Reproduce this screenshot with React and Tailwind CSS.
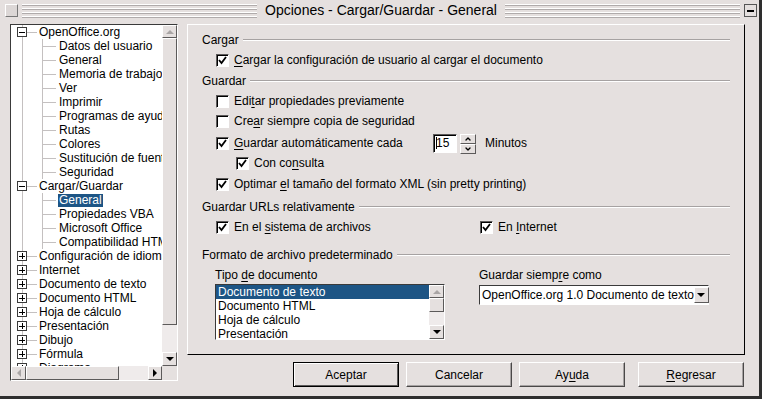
import { ChevronUp, ChevronDown } from "lucide-react";

const font = "font-['Liberation_Sans',Arial,sans-serif]";

const treeRows = [
  { t: "OpenOffice.org", lvl: 0, exp: "-" },
  { t: "Datos del usuario", lvl: 1 },
  { t: "General", lvl: 1 },
  { t: "Memoria de trabajo", lvl: 1 },
  { t: "Ver", lvl: 1 },
  { t: "Imprimir", lvl: 1 },
  { t: "Programas de ayuda", lvl: 1 },
  { t: "Rutas", lvl: 1 },
  { t: "Colores", lvl: 1 },
  { t: "Sustitución de fuentes", lvl: 1 },
  { t: "Seguridad", lvl: 1 },
  { t: "Cargar/Guardar", lvl: 0, exp: "-" },
  { t: "General", lvl: 1, sel: true },
  { t: "Propiedades VBA", lvl: 1 },
  { t: "Microsoft Office", lvl: 1 },
  { t: "Compatibilidad HTML", lvl: 1 },
  { t: "Configuración de idioma", lvl: 0, exp: "+" },
  { t: "Internet", lvl: 0, exp: "+" },
  { t: "Documento de texto", lvl: 0, exp: "+" },
  { t: "Documento HTML", lvl: 0, exp: "+" },
  { t: "Hoja de cálculo", lvl: 0, exp: "+" },
  { t: "Presentación", lvl: 0, exp: "+" },
  { t: "Dibujo", lvl: 0, exp: "+" },
  { t: "Fórmula", lvl: 0, exp: "+" },
  { t: "Diagrama", lvl: 0, exp: "+" },
];

// little +/- box used in the tree
function Expander({ sign }) {
  return (
    <span className="absolute left-[5px] top-[2px] flex h-[10px] w-[10px] items-center justify-center border border-[#3a3a3a] bg-white">
      <span className="absolute h-px w-[6px] bg-black" />
      {sign === "+" && <span className="absolute h-[6px] w-px bg-black" />}
    </span>
  );
}

function TreeRow({ row }) {
  return (
    <div className="flex h-[14px] items-center">
      <div className={`relative h-full shrink-0 ${row.lvl ? "w-[46px]" : "w-[26px]"}`}>
        <span className="absolute inset-y-0 left-[10px] border-l border-[#c4c0c0]" />
        {row.lvl === 0 ? (
          <>
            <span className="absolute left-[15px] top-[7px] w-[10px] border-t border-[#c4c0c0]" />
            <Expander sign={row.exp} />
          </>
        ) : (
          <>
            <span className="absolute inset-y-0 left-[30px] border-l border-[#c4c0c0]" />
            <span className="absolute left-[30px] top-[7px] w-[14px] border-t border-[#c4c0c0]" />
          </>
        )}
      </div>
      <span
        className={`whitespace-nowrap px-px leading-[13px] ${
          row.sel ? "bg-[#1d5585] text-white" : "text-black"
        }`}
      >
        {row.t}
      </span>
    </div>
  );
}

function ArrowBtn({ dir, className = "" }) {
  const paths = {
    up: "M1 6 L5 2 L9 6 Z",
    down: "M1 2 L9 2 L5 6 Z",
    left: "M6 1 L2 5 L6 9 Z",
    right: "M2 1 L6 5 L2 9 Z",
  };
  const vert = dir === "up" || dir === "down";
  return (
    <div
      className={`flex shrink-0 items-center justify-center border border-t-white border-l-white border-b-[#5c5a5a] border-r-[#5c5a5a] bg-[#e5e0df] ${className}`}
    >
      <svg width={vert ? 10 : 8} height={vert ? 8 : 10} viewBox={vert ? "0 0 10 8" : "0 0 8 10"}>
        <path d={paths[dir]} fill={dir === "up" || dir === "left" ? "#a9a5a5" : "#000"} />
      </svg>
    </div>
  );
}

function Check({ on }) {
  return (
    <span className="flex h-[13px] w-[13px] shrink-0 items-center justify-center border border-t-[#5c5a5a] border-l-[#5c5a5a] border-b-white border-r-white bg-white shadow-[inset_1px_1px_0_#000]">
      {on && (
        <svg width="9" height="9" viewBox="0 0 9 9">
          <path d="M1 4 L3.5 7 L8 1" fill="none" stroke="#000" strokeWidth="1.8" />
        </svg>
      )}
    </span>
  );
}

// label text with an underlined access key
function Label({ text, u }) {
  if (u === undefined) return <span>{text}</span>;
  return (
    <span className="whitespace-nowrap">
      {text.slice(0, u)}
      <span className="underline underline-offset-2">{text[u]}</span>
      {text.slice(u + 1)}
    </span>
  );
}

function CheckRow({ on, text, u, className = "" }) {
  return (
    <div className={`flex h-[20px] items-center gap-[5px] ${className}`}>
      <Check on={on} />
      <Label text={text} u={u} />
    </div>
  );
}

function Heading({ text, className = "" }) {
  return (
    <div className={`flex h-[20px] items-center gap-[4px] pr-[14px] ${className}`}>
      <span className="whitespace-nowrap">{text}</span>
      <div className="flex-1 border-t border-b border-t-[#a6a2a2] border-b-white" />
    </div>
  );
}

function Button({ children, def }) {
  return (
    <button
      className={`h-[25px] w-[106px] bg-[#e5e0df] text-black ${
        def
          ? "border border-black shadow-[inset_1px_1px_0_#fff,inset_-1px_-1px_0_#5c5a5a]"
          : "border border-t-white border-l-white border-b-[#4a4848] border-r-[#4a4848] shadow-[inset_-1px_-1px_0_#a6a2a2]"
      }`}
    >
      {children}
    </button>
  );
}

function Stripes({ className }) {
  return (
    <div className={`flex flex-col gap-[2px] ${className}`}>
      {[0, 1, 2, 3].map((i) => (
        <div key={i} className="border-t border-b border-t-white border-b-[#b0abab]" />
      ))}
    </div>
  );
}

export default function App() {
  return (
    <div
      className={`${font} flex h-[399px] w-[762px] flex-col overflow-hidden border-r-[3px] border-b-[3px] border-r-[#2e2e2e] border-b-[#2e2e2e] bg-[#e5e0df] text-[12px] text-black`}
    >
      {/* title bar */}
      <div className="flex h-[21px] shrink-0 items-center gap-[4px] pl-[5px] pr-[2px]">
        <div className="h-[13px] w-[13px] shrink-0 border border-t-white border-l-white border-b-[#777] border-r-[#777] bg-[#dcd7d6]" />
        <Stripes className="flex-1" />
        <span className="px-[4px] text-[14px] whitespace-nowrap">Opciones - Cargar/Guardar - General</span>
        <Stripes className="flex-1" />
        <div className="flex h-[13px] w-[13px] shrink-0 items-center justify-center border border-[#555] bg-[#e5e0df]">
          <span className="h-[2px] w-[7px] bg-black" />
        </div>
      </div>

      <div className="flex flex-1 gap-[9px] pl-[10px] pt-[3px]">
        {/* tree */}
        <div className="flex h-[357px] w-[168px] shrink-0 flex-col border border-t-[#3a3a3a] border-l-[#3a3a3a] border-b-white border-r-white shadow-[inset_1px_1px_0_#8a8686]">
          <div className="flex min-h-0 flex-1">
            <div className="min-w-0 flex-1 overflow-hidden bg-white pl-[1px]">
              {treeRows.map((r, i) => (
                <TreeRow key={i} row={r} />
              ))}
            </div>
            <div className="flex w-[15px] flex-col bg-[#efebeb]">
              <ArrowBtn dir="up" className="h-[13px]" />
              <div className="h-[287px] border border-t-white border-l-white border-b-[#5c5a5a] border-r-[#5c5a5a] bg-[#e5e0df]" />
              <div className="flex-1" />
              <ArrowBtn dir="down" className="h-[14px]" />
            </div>
          </div>
          <div className="flex h-[14px] shrink-0 bg-[#efebeb]">
            <ArrowBtn dir="left" className="w-[15px]" />
            <div className="w-[93px] border border-t-white border-l-white border-b-[#5c5a5a] border-r-[#5c5a5a] bg-[#e5e0df]" />
            <div className="flex-1" />
            <ArrowBtn dir="right" className="w-[14px]" />
            <div className="w-[15px] bg-[#e5e0df]" />
          </div>
        </div>

        {/* right column */}
        <div className="flex w-[558px] flex-col">
          <div className="flex h-[331px] flex-col border border-t-white border-l-white border-b-black border-r-black pl-[14px] pt-[5px]">
            <Heading text="Cargar" />
            <CheckRow on text="Cargar la configuración de usuario al cargar el documento" u={0} className="pl-[14px]" />
            <Heading text="Guardar" className="mt-[1px]" />
            <CheckRow text="Editar propiedades previamente" u={3} className="pl-[14px]" />
            <CheckRow text="Crear siempre copia de seguridad" u={3} className="pl-[14px]" />
            <div className="mt-[2px] flex h-[20px] items-center pl-[14px]">
              <div className="flex w-[217px] items-center gap-[5px]">
                <Check on />
                <Label text="Guardar automáticamente cada" u={0} />
              </div>
              <div className="flex h-[19px] w-[24px] items-center border border-t-[#5c5a5a] border-l-[#5c5a5a] border-b-white border-r-white bg-white pl-[2px] shadow-[inset_1px_1px_0_#000]">
                <span className="h-[12px] w-px bg-black" />
                <span className="-ml-px">15</span>
              </div>
              <div className="ml-[3px] flex h-[18px] w-[16px] flex-col">
                <div className="flex flex-1 items-center justify-center border border-t-white border-l-white border-b-[#5c5a5a] border-r-[#5c5a5a]">
                  <ChevronUp size={8} strokeWidth={4} color="#000" />
                </div>
                <div className="flex flex-1 items-center justify-center border border-t-white border-l-white border-b-[#5c5a5a] border-r-[#5c5a5a]">
                  <ChevronDown size={8} strokeWidth={4} color="#000" />
                </div>
              </div>
              <span className="ml-[9px]">Minutos</span>
            </div>
            <CheckRow on text="Con consulta" u={6} className="pl-[34px]" />
            <CheckRow on text="Optimar el tamaño del formato XML (sin pretty printing)" u={8} className="mt-[1px] pl-[14px]" />
            <Heading text="Guardar URLs relativamente" className="mt-[3px]" />
            <div className="flex">
              <CheckRow on text="En el sistema de archivos" u={6} className="w-[278px] pl-[14px]" />
              <CheckRow on text="En Internet" u={3} />
            </div>
            <Heading text="Formato de archivo predeterminado" className="mt-[8px]" />
            <div className="flex pl-[13px]">
              <div className="flex w-[264px] flex-col">
                <div className="flex h-[19px] items-center">
                  <Label text="Tipo de documento" u={5} />
                </div>
                <div className="flex h-[56px] w-[230px] border border-t-[#3a3a3a] border-l-[#3a3a3a] border-b-white border-r-white bg-white">
                  <div className="min-w-0 flex-1 overflow-hidden leading-[14px]">
                    <div className="bg-[#1d5585] pl-[2px] text-white">Documento de texto</div>
                    <div className="pl-[2px]">Documento HTML</div>
                    <div className="pl-[2px]">Hoja de cálculo</div>
                    <div className="pl-[2px]">Presentación</div>
                  </div>
                  <div className="flex w-[15px] flex-col bg-[#efebeb]">
                    <ArrowBtn dir="up" className="h-[13px]" />
                    <div className="h-[14px] border border-t-white border-l-white border-b-[#5c5a5a] border-r-[#5c5a5a] bg-[#e5e0df]" />
                    <div className="flex-1" />
                    <ArrowBtn dir="down" className="h-[14px]" />
                  </div>
                </div>
              </div>
              <div className="flex flex-col">
                <div className="flex h-[19px] items-center">
                  <Label text="Guardar siempre como" u={13} />
                </div>
                <div className="mt-px flex h-[20px] w-[230px] items-center border border-t-[#3a3a3a] border-l-[#3a3a3a] border-b-white border-r-white bg-white pl-[2px] pr-[1px]">
                  <span className="flex-1 whitespace-nowrap">OpenOffice.org 1.0 Documento de texto</span>
                  <ArrowBtn dir="down" className="h-[16px] w-[15px]" />
                </div>
              </div>
            </div>
          </div>

          {/* buttons */}
          <div className="mt-[7px] flex items-center justify-end pr-[1px]">
            <Button def>Aceptar</Button>
            <div className="w-[7px]" />
            <Button>Cancelar</Button>
            <div className="w-[7px]" />
            <Button>
              <Label text="Ayuda" u={2} />
            </Button>
            <div className="w-[13px]" />
            <Button>
              <Label text="Regresar" u={0} />
            </Button>
          </div>
        </div>
      </div>
    </div>
  );
}
